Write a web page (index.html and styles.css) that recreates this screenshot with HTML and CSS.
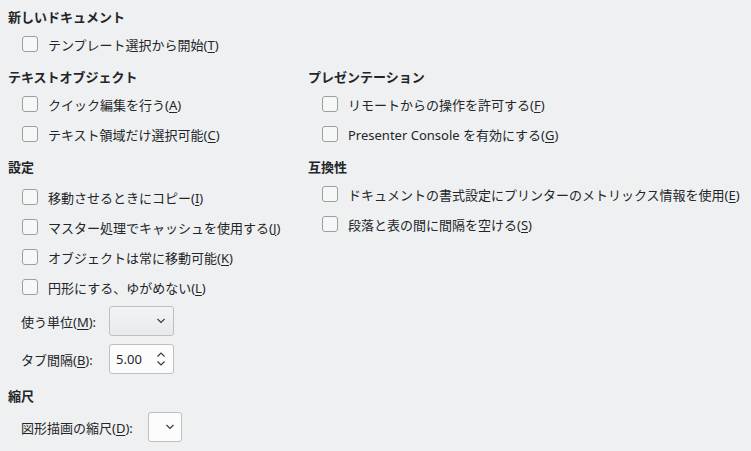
FILE: index.html
```html
<!DOCTYPE html>
<html lang="ja">
<head>
<meta charset="utf-8">
<link rel="stylesheet" href="styles.css">
</head>
<body>
<div class="page">
  <section class="group">
    <h2 class="heading">新しいドキュメント</h2>
    <label class="check"><span class="box"></span><span>テンプレート選択から開始(<u>T</u>)</span></label>
  </section>
  <div class="columns">
    <div class="col">
      <section class="group">
        <h2 class="heading">テキストオブジェクト</h2>
        <label class="check"><span class="box"></span><span>クイック編集を行う(<u>A</u>)</span></label>
        <label class="check"><span class="box"></span><span>テキスト領域だけ選択可能(<u>C</u>)</span></label>
      </section>
      <section class="group settings">
        <h2 class="heading">設定</h2>
        <label class="check"><span class="box"></span><span>移動させるときにコピー(<u>I</u>)</span></label>
        <label class="check"><span class="box"></span><span>マスター処理でキャッシュを使用する(<u>J</u>)</span></label>
        <label class="check"><span class="box"></span><span>オブジェクトは常に移動可能(<u>K</u>)</span></label>
        <label class="check"><span class="box"></span><span>円形にする、ゆがめない(<u>L</u>)</span></label>
        <div class="form">
          <span class="flabel">使う単位(<u>M</u>):</span>
          <span class="combo combo-wide"><svg class="chev" width="10" height="6" viewBox="0 0 10 6"><path d="M1.5 1 L5 4.5 L8.5 1" fill="none" stroke="#31363b" stroke-width="1.1"/></svg></span>
          <span class="flabel">タブ間隔(<u>B</u>):</span>
          <span class="spin"><span class="spin-val">5.00</span><svg class="spin-arrows" width="10" height="16" viewBox="0 0 10 16"><path d="M1.5 5.5 L5 2 L8.5 5.5" fill="none" stroke="#31363b" stroke-width="1.1"/><path d="M1.5 10.5 L5 14 L8.5 10.5" fill="none" stroke="#31363b" stroke-width="1.1"/></svg></span>
        </div>
      </section>
      <section class="group scale">
        <h2 class="heading">縮尺</h2>
        <div class="form">
          <span class="flabel">図形描画の縮尺(<u>D</u>):</span>
          <span class="combo combo-small"><svg class="chev" width="10" height="6" viewBox="0 0 10 6"><path d="M1.5 1 L5 4.5 L8.5 1" fill="none" stroke="#31363b" stroke-width="1.1"/></svg></span>
        </div>
      </section>
    </div>
    <div class="col">
      <section class="group">
        <h2 class="heading">プレゼンテーション</h2>
        <label class="check"><span class="box"></span><span>リモートからの操作を許可する(<u>F</u>)</span></label>
        <label class="check"><span class="box"></span><span>Presenter Console を有効にする(<u>G</u>)</span></label>
      </section>
      <section class="group">
        <h2 class="heading">互換性</h2>
        <label class="check"><span class="box"></span><span>ドキュメントの書式設定にプリンターのメトリックス情報を使用(<u>E</u>)</span></label>
        <label class="check"><span class="box"></span><span>段落と表の間に間隔を空ける(<u>S</u>)</span></label>
      </section>
    </div>
  </div>
</div>
</body>
</html>
```

FILE: styles.css
```css
html, body {
  margin: 0;
  padding: 0;
  background: #eff0f1;
}
body {
  font-family: "Noto Sans", "Noto Sans CJK JP", sans-serif;
  font-size: 13px;
  color: #232629;
}
.page {
  padding: 7px 8px 0;
}
.group {
  display: flex;
  flex-direction: column;
}
.group + .group {
  margin-top: 8px;
}
.heading {
  margin: 0 0 2px;
  height: 20px;
  line-height: 20px;
  font-size: 13px;
  font-weight: bold;
}
.check {
  display: flex;
  align-items: center;
  height: 30px;
  padding-left: 14px;
  gap: 10px;
  white-space: nowrap;
}
.box {
  width: 14px;
  height: 14px;
  border: 1px solid #9c9fa2;
  border-radius: 3px;
  background: #f6f7f7;
  flex: none;
}
u {
  text-decoration-thickness: 1px;
  text-underline-offset: 2px;
}
.columns {
  margin-top: 8px;
  display: grid;
  grid-template-columns: 300px 1fr;
}
.settings .heading {
  margin-bottom: 5px;
}
.form {
  display: grid;
  grid-template-columns: auto auto;
  justify-content: start;
  align-items: center;
  column-gap: 13px;
  row-gap: 8px;
  padding-left: 13px;
  margin-top: 4px;
}
.flabel {
  white-space: nowrap;
}
.combo, .spin {
  box-sizing: border-box;
  height: 30px;
  border: 1px solid #bdbfc1;
  border-radius: 3px;
  display: flex;
  align-items: center;
  justify-content: flex-end;
}
.combo-wide {
  width: 65px;
  padding-right: 7px;
  background: linear-gradient(#f2f3f4, #e9eaeb);
}
.combo-small {
  width: 34px;
  padding-right: 6px;
  background: #fcfcfc;
}
.spin {
  width: 65px;
  background: #fcfcfc;
  justify-content: space-between;
  padding: 0 7px 0 6px;
}
.group.scale {
  margin-top: 12px;
}
.scale .heading {
  margin-bottom: 6px;
}
.scale .form {
  margin-top: 0;
  column-gap: 15px;
}
```
